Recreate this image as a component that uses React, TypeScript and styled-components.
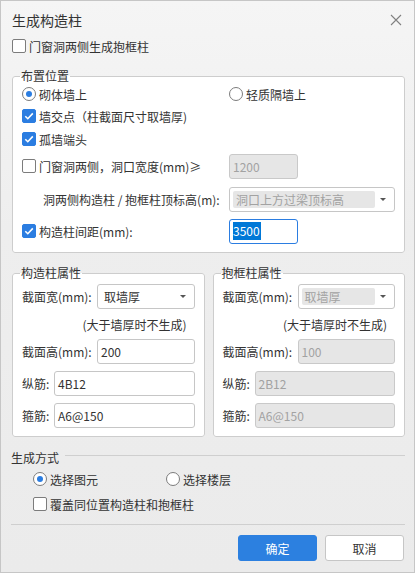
import React from "react";
import styled, { createGlobalStyle } from "styled-components";

const GlobalStyle = createGlobalStyle`
  html, body {
    margin: 0;
    padding: 0;
  }
  body {
    font-family: "Noto Sans CJK SC", "Noto Sans", sans-serif;
    font-size: 12px;
    color: #333;
  }
  * {
    box-sizing: border-box;
  }
`;

const Window = styled.div`
  width: 415px;
  height: 573px;
  border: 1px solid #c6c6c6;
  background: linear-gradient(180deg, #f5f5f5 0%, #eeeeee 40%, #ebebeb 100%);
  padding: 0 9px 0 10px;
  display: flex;
  flex-direction: column;
`;

const Header = styled.div`
  height: 37px;
  display: flex;
  align-items: center;
  justify-content: space-between;
  padding-left: 1px;
`;

const Title = styled.div`
  font-size: 14px;
  color: #333;
`;

const Close = styled.div`
  width: 14px;
  height: 14px;
  margin-right: 2px;
  display: flex;
  align-items: center;
  justify-content: center;
`;

const TopRow = styled.div`
  height: 16px;
  display: flex;
  align-items: center;
  padding-left: 1px;
`;

const Choice = styled.label<{ $width?: number }>`
  display: inline-flex;
  align-items: center;
  gap: 3px;
  white-space: nowrap;
  width: ${(p) => (p.$width ? `${p.$width}px` : "auto")};
`;

const Box = styled.span<{ $checked?: boolean }>`
  width: 14px;
  height: 14px;
  border-radius: 2px;
  flex-shrink: 0;
  display: flex;
  align-items: center;
  justify-content: center;
  background: ${(p) => (p.$checked ? "#2b7de1" : "#fff")};
  border: 1px solid ${(p) => (p.$checked ? "#2b7de1" : "#7c7c7c")};
`;

const Ring = styled.span<{ $checked?: boolean }>`
  width: 14px;
  height: 14px;
  border-radius: 50%;
  flex-shrink: 0;
  background: #fff;
  border: 1px solid #7c7c7c;
  display: flex;
  align-items: center;
  justify-content: center;

  &::after {
    content: "";
    width: 6px;
    height: 6px;
    border-radius: 50%;
    background: ${(p) => (p.$checked ? "#2b7de1" : "transparent")};
  }
`;

const Group = styled.fieldset<{ $mt: number }>`
  margin: ${(p) => p.$mt}px 0 0 1px;
  padding: 0 9px 8px;
  border: 1px solid #cdcdcd;
  border-radius: 3px;
  background: #fff;
  min-width: 0;
`;

const Legend = styled.legend`
  padding: 0 1px;
  margin-left: -2px;
  line-height: 16px;
  font-size: 12px;
  color: #333;
`;

const Row = styled.div<{ $cols: string; $h: number; $mt: number }>`
  display: grid;
  grid-template-columns: ${(p) => p.$cols};
  align-items: center;
  height: ${(p) => p.$h}px;
  margin-top: ${(p) => p.$mt}px;
`;

const Label = styled.div<{ $indent?: number }>`
  white-space: nowrap;
  padding-left: ${(p) => p.$indent ?? 0}px;
`;

const Note = styled.div<{ $mt: number }>`
  height: 22px;
  margin-top: ${(p) => p.$mt}px;
  display: flex;
  align-items: center;
  justify-content: flex-end;
  padding-right: 8px;
`;

const Field = styled.div<{ $disabled?: boolean; $focused?: boolean; $w?: number }>`
  width: ${(p) => (p.$w ? `${p.$w}px` : "100%")};
  height: 25px;
  border-radius: 3px;
  border: 1px solid ${(p) => (p.$focused ? "#2b7de1" : p.$disabled ? "#c9c9c9" : "#c6c6c6")};
  background: ${(p) => (p.$disabled ? "#e6e6e6" : "#fff")};
  color: ${(p) => (p.$disabled ? "#a2a2a2" : "#333")};
  display: flex;
  align-items: center;
  padding: 0 3px;
  font-size: 12px;
`;

const Selected = styled.span`
  background: #0078d7;
  color: #fff;
  line-height: 18px;
  padding: 0 1px 0 0;
`;

const Select = styled.div`
  width: 100%;
  height: 25px;
  border-radius: 3px;
  border: 1px solid #c6c6c6;
  background: #fff;
  display: flex;
  align-items: center;
  padding: 3px;
`;

const SelectValue = styled.div<{ $disabled?: boolean }>`
  flex: 1;
  height: 100%;
  border-radius: 2px;
  display: flex;
  align-items: center;
  padding-left: ${(p) => (p.$disabled ? 3 : 3)}px;
  background: ${(p) => (p.$disabled ? "#e6e6e6" : "transparent")};
  color: ${(p) => (p.$disabled ? "#a2a2a2" : "#333")};
`;

const Caret = styled.div`
  width: 16px;
  display: flex;
  justify-content: center;

  &::after {
    content: "";
    border-left: 3px solid transparent;
    border-right: 3px solid transparent;
    border-top: 3px solid #555;
  }
`;

const Columns = styled.div`
  display: grid;
  grid-template-columns: 1fr 1fr;
  gap: 7px;
  margin-top: 12px;
`;

const SectionHead = styled.div`
  height: 16px;
  margin-top: 12px;
  display: flex;
  align-items: center;
  gap: 6px;

  &::after {
    content: "";
    flex: 1;
    height: 1px;
    margin-top: -3px;
    background: #cfcfcf;
  }
`;

const OptionRow = styled.div<{ $mt: number }>`
  height: 20px;
  margin-top: ${(p) => p.$mt}px;
  padding-left: 22px;
  display: flex;
  align-items: center;
`;

const Separator = styled.div`
  height: 1px;
  background: #cfcfcf;
  margin-top: 10px;
`;

const Footer = styled.div`
  display: flex;
  justify-content: flex-end;
  gap: 8px;
  margin-top: 10px;
  padding-right: 1px;
`;

const Button = styled.button<{ $primary?: boolean }>`
  width: 79px;
  height: 26px;
  border-radius: 3px;
  font-family: inherit;
  font-size: 12px;
  cursor: pointer;
  background: ${(p) => (p.$primary ? "#2c80e0" : "#fff")};
  color: ${(p) => (p.$primary ? "#fff" : "#333")};
  border: 1px solid ${(p) => (p.$primary ? "#2c80e0" : "#c6c6c6")};
`;

const Check = ({ checked, children }: { checked?: boolean; children: React.ReactNode }) => (
  <Choice>
    <Box $checked={checked}>
      {checked && (
        <svg width="12" height="12" viewBox="0 0 12 12">
          <polyline points="2.3,6.2 4.8,8.7 9.8,3.4" fill="none" stroke="#fff" strokeWidth="1.6" />
        </svg>
      )}
    </Box>
    {children}
  </Choice>
);

const Radio = ({ checked, width, children }: { checked?: boolean; width?: number; children: React.ReactNode }) => (
  <Choice $width={width}>
    <Ring $checked={checked} />
    {children}
  </Choice>
);

const Dropdown = ({ value, disabled }: { value: string; disabled?: boolean }) => (
  <Select>
    <SelectValue $disabled={disabled}>{value}</SelectValue>
    <Caret />
  </Select>
);

type Props = { title: string; disabled?: boolean; values: string[] };

const ColumnGroup = ({ title, disabled, values }: Props) => (
  <Group $mt={0}>
    <Legend>{title}</Legend>
    <Row $cols="75px 1fr" $h={26} $mt={2}>
      <Label>截面宽(mm):</Label>
      <Dropdown value="取墙厚" disabled={disabled} />
    </Row>
    <Note $mt={4}>(大于墙厚时不生成)</Note>
    <Row $cols="75px 1fr" $h={26} $mt={3}>
      <Label>截面高(mm):</Label>
      <Field $disabled={disabled}>{values[0]}</Field>
    </Row>
    <Row $cols="32px 1fr" $h={26} $mt={6}>
      <Label>纵筋:</Label>
      <Field $disabled={disabled}>{values[1]}</Field>
    </Row>
    <Row $cols="32px 1fr" $h={26} $mt={6}>
      <Label>箍筋:</Label>
      <Field $disabled={disabled}>{values[2]}</Field>
    </Row>
  </Group>
);

const App = () => {
  return (
    <>
      <GlobalStyle />
      <Window>
        <Header>
          <Title>生成构造柱</Title>
          <Close>
            <svg width="12" height="12" viewBox="0 0 12 12">
              <path d="M1 1 L11 11 M11 1 L1 11" stroke="#808080" strokeWidth="1.1" />
            </svg>
          </Close>
        </Header>
        <TopRow>
          <Check>门窗洞两侧生成抱框柱</Check>
        </TopRow>

        <Group $mt={14}>
          <Legend>布置位置</Legend>
          <Row $cols="207px 1fr" $h={20} $mt={0}>
            <Radio checked>砌体墙上</Radio>
            <Radio>轻质隔墙上</Radio>
          </Row>
          <Row $cols="1fr" $h={22} $mt={1}>
            <Check checked>墙交点（柱截面尺寸取墙厚)</Check>
          </Row>
          <Row $cols="1fr" $h={22} $mt={1}>
            <Check checked>孤墙端头</Check>
          </Row>
          <Row $cols="207px 1fr" $h={26} $mt={3}>
            <Check>门窗洞两侧，洞口宽度(mm)≥</Check>
            <Field $disabled $w={69}>1200</Field>
          </Row>
          <Row $cols="207px 1fr" $h={26} $mt={7}>
            <Label $indent={21}>洞两侧构造柱 / 抱框柱顶标高(m):</Label>
            <Dropdown value="洞口上方过梁顶标高" disabled />
          </Row>
          <Row $cols="207px 1fr" $h={26} $mt={6}>
            <Check checked>构造柱间距(mm):</Check>
            <Field $focused $w={69}>
              <Selected>3500</Selected>
            </Field>
          </Row>
        </Group>

        <Columns>
          <ColumnGroup title="构造柱属性" values={["200", "4B12", "A6@150"]} />
          <ColumnGroup title="抱框柱属性" disabled values={["100", "2B12", "A6@150"]} />
        </Columns>

        <SectionHead>生成方式</SectionHead>
        <OptionRow $mt={4}>
          <Radio checked width={133}>选择图元</Radio>
          <Radio>选择楼层</Radio>
        </OptionRow>
        <OptionRow $mt={5}>
          <Check>覆盖同位置构造柱和抱框柱</Check>
        </OptionRow>
        <Separator />
        <Footer>
          <Button $primary>确定</Button>
          <Button>取消</Button>
        </Footer>
      </Window>
    </>
  );
};

export default App;
